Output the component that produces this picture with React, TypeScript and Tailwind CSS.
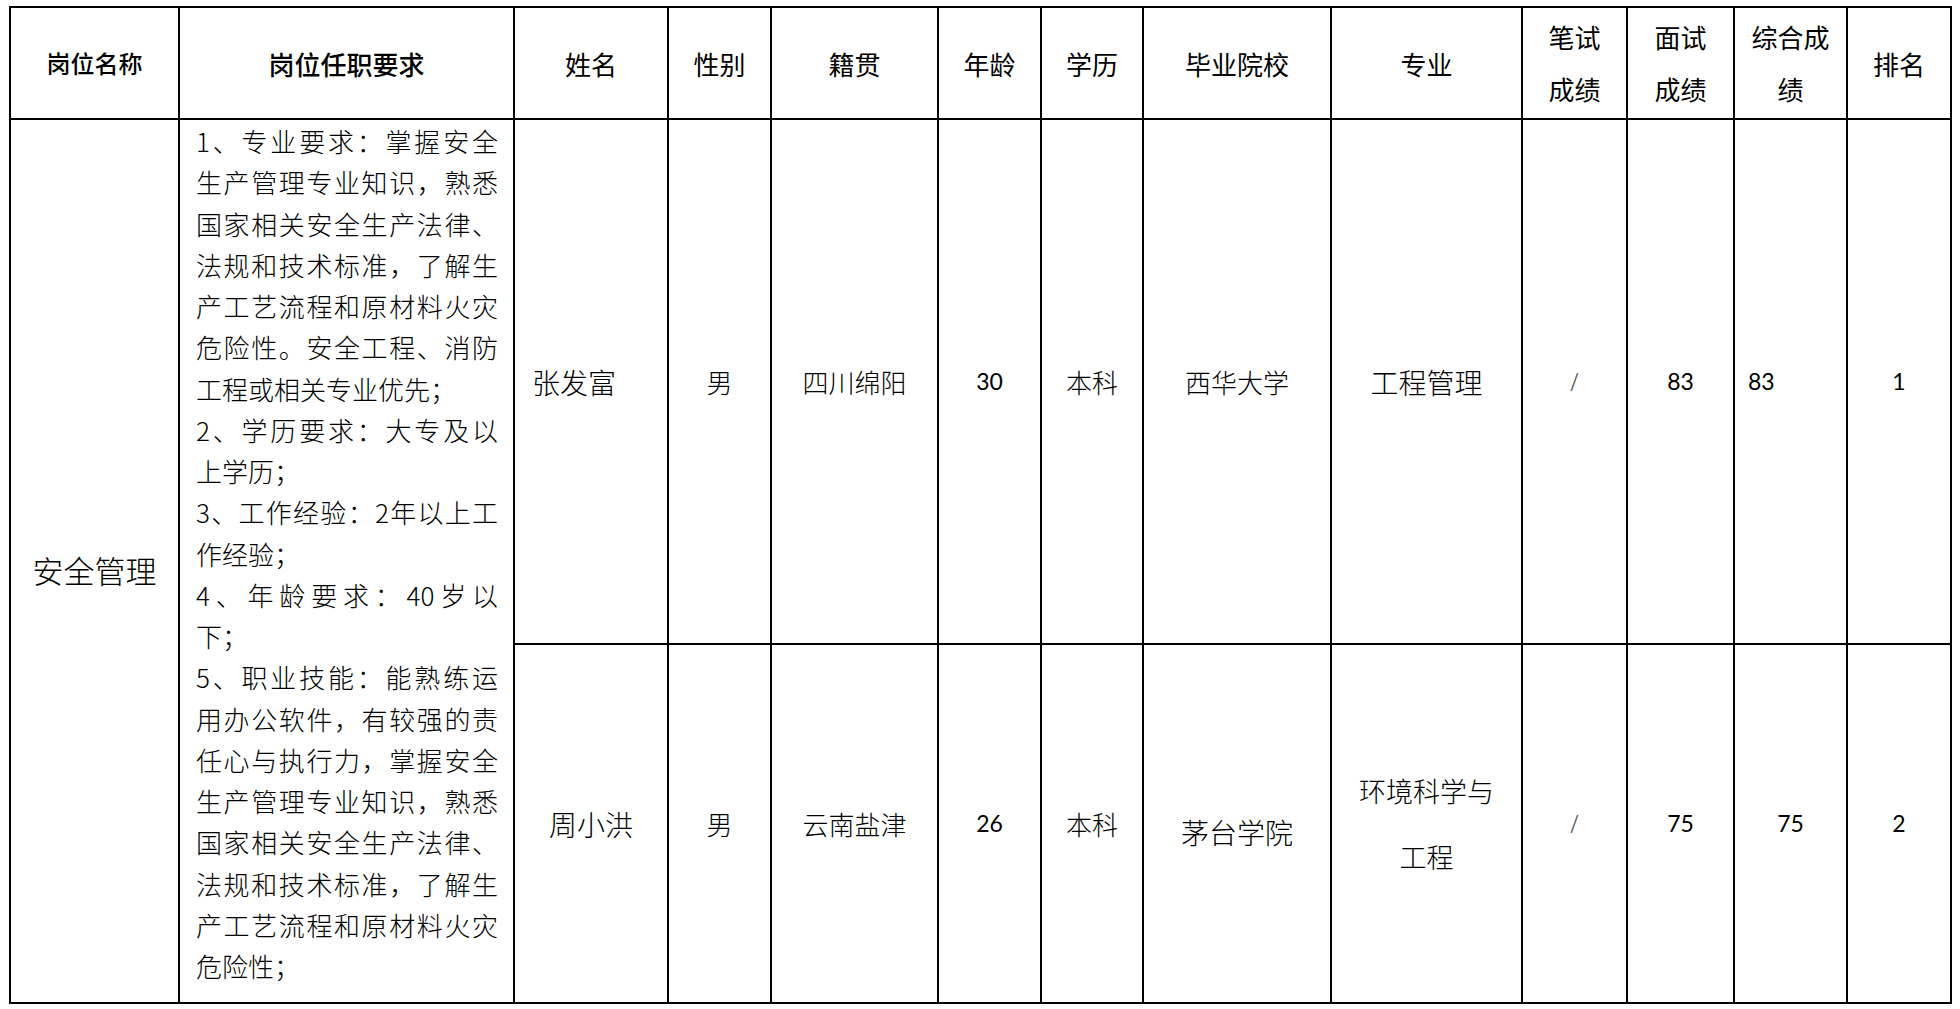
import React from "react"

const reqLines = [
  { t: "1、专业要求：掌握安全", j: true },
  { t: "生产管理专业知识，熟悉", j: true },
  { t: "国家相关安全生产法律、", j: true },
  { t: "法规和技术标准，了解生", j: true },
  { t: "产工艺流程和原材料火灾", j: true },
  { t: "危险性。安全工程、消防", j: true },
  { t: "工程或相关专业优先；", j: false },
  { t: "2、学历要求：大专及以", j: true },
  { t: "上学历；", j: false },
  { t: "3、工作经验：2年以上工", j: true },
  { t: "作经验；", j: false },
  { t: "4、年龄要求：40岁以", j: true },
  { t: "下；", j: false },
  { t: "5、职业技能：能熟练运", j: true },
  { t: "用办公软件，有较强的责", j: true },
  { t: "任心与执行力，掌握安全", j: true },
  { t: "生产管理专业知识，熟悉", j: true },
  { t: "国家相关安全生产法律、", j: true },
  { t: "法规和技术标准，了解生", j: true },
  { t: "产工艺流程和原材料火灾", j: true },
  { t: "危险性；", j: false },
]

const App = () => {
  return (
    <div className="min-h-screen bg-white pl-[9px] pt-[6px] text-black font-['Noto_Sans_CJK_SC','Noto_Sans',sans-serif]">
      <table className="table-fixed border-collapse w-[1943px]">
        <colgroup>
          <col className="w-[169px]" />
          <col className="w-[335px]" />
          <col className="w-[154px]" />
          <col className="w-[103px]" />
          <col className="w-[167px]" />
          <col className="w-[103px]" />
          <col className="w-[102px]" />
          <col className="w-[188px]" />
          <col className="w-[191px]" />
          <col className="w-[105px]" />
          <col className="w-[107px]" />
          <col className="w-[113px]" />
          <col className="w-[104px]" />
        </colgroup>

        {/* 表头 */}
        <thead>
          <tr className="h-[112px] text-[26px]">
            <th className="border-2 border-black p-0 font-medium text-[24px]">岗位名称</th>
            <th className="border-2 border-black p-0 font-medium">岗位任职要求</th>
            <th className="border-2 border-black p-0 font-normal">姓名</th>
            <th className="border-2 border-black p-0 font-normal">性别</th>
            <th className="border-2 border-black p-0 font-normal">籍贯</th>
            <th className="border-2 border-black p-0 font-normal">年龄</th>
            <th className="border-2 border-black p-0 font-normal">学历</th>
            <th className="border-2 border-black p-0 font-normal">毕业院校</th>
            <th className="border-2 border-black p-0 font-normal">专业</th>
            <th className="border-2 border-black p-0 font-normal leading-[52px]">
              笔试
              <br />
              成绩
            </th>
            <th className="border-2 border-black p-0 font-normal leading-[52px]">
              面试
              <br />
              成绩
            </th>
            <th className="border-2 border-black p-0 font-normal leading-[52px]">
              综合成
              <br />
              绩
            </th>
            <th className="border-2 border-black p-0 font-normal">排名</th>
          </tr>
        </thead>

        <tbody>
          <tr className="h-[525px] text-[26px] font-light">
            <td
              rowSpan={2}
              className="border-2 border-black p-0 pt-[18px] text-center align-middle text-[31px]"
            >
              安全管理
            </td>
            <td
              rowSpan={2}
              className="border-2 border-black pl-[16px] pr-[15px] py-0 align-top leading-[41.25px]"
            >
              {reqLines.map((l, i) => (
                <div
                  key={i}
                  className={l.j ? "text-justify [text-align-last:justify]" : "text-left"}
                >
                  {l.t}
                </div>
              ))}
            </td>
            <td className="border-2 border-black p-0 pl-[17px] text-left text-[28px]">张发富</td>
            <td className="border-2 border-black p-0 text-center">男</td>
            <td className="border-2 border-black p-0 text-center">四川绵阳</td>
            <td className="border-2 border-black p-0 text-center font-['Lato',sans-serif] font-normal text-[23px]">30</td>
            <td className="border-2 border-black p-0 text-center">本科</td>
            <td className="border-2 border-black p-0 text-center">西华大学</td>
            <td className="border-2 border-black p-0 text-center text-[28px]">工程管理</td>
            <td className="border-2 border-black p-0 text-center font-['Liberation_Serif',serif] font-normal text-[28px] text-[#555]">/</td>
            <td className="border-2 border-black p-0 text-center font-['Lato',sans-serif] font-normal text-[23px]">83</td>
            <td className="border-2 border-black p-0 pl-[13px] text-left font-['Lato',sans-serif] font-normal text-[23px]">83</td>
            <td className="border-2 border-black p-0 text-center font-['Lato',sans-serif] font-normal text-[23px]">1</td>
          </tr>

          <tr className="h-[359px] text-[26px] font-light">
            <td className="border-2 border-black p-0 text-center text-[28px]">周小洪</td>
            <td className="border-2 border-black p-0 text-center">男</td>
            <td className="border-2 border-black p-0 text-center">云南盐津</td>
            <td className="border-2 border-black p-0 text-center font-['Lato',sans-serif] font-normal text-[23px]">26</td>
            <td className="border-2 border-black p-0 text-center">本科</td>
            <td className="border-2 border-black p-0 pt-[16px] text-center text-[28px]">茅台学院</td>
            <td className="border-2 border-black p-0 text-center text-[27px] leading-[66px]">
              环境科学与
              <br />
              工程
            </td>
            <td className="border-2 border-black p-0 text-center font-['Liberation_Serif',serif] font-normal text-[28px] text-[#555]">/</td>
            <td className="border-2 border-black p-0 text-center font-['Lato',sans-serif] font-normal text-[23px]">75</td>
            <td className="border-2 border-black p-0 text-center font-['Lato',sans-serif] font-normal text-[23px]">75</td>
            <td className="border-2 border-black p-0 text-center font-['Lato',sans-serif] font-normal text-[23px]">2</td>
          </tr>
        </tbody>
      </table>
    </div>
  )
}

export default App
